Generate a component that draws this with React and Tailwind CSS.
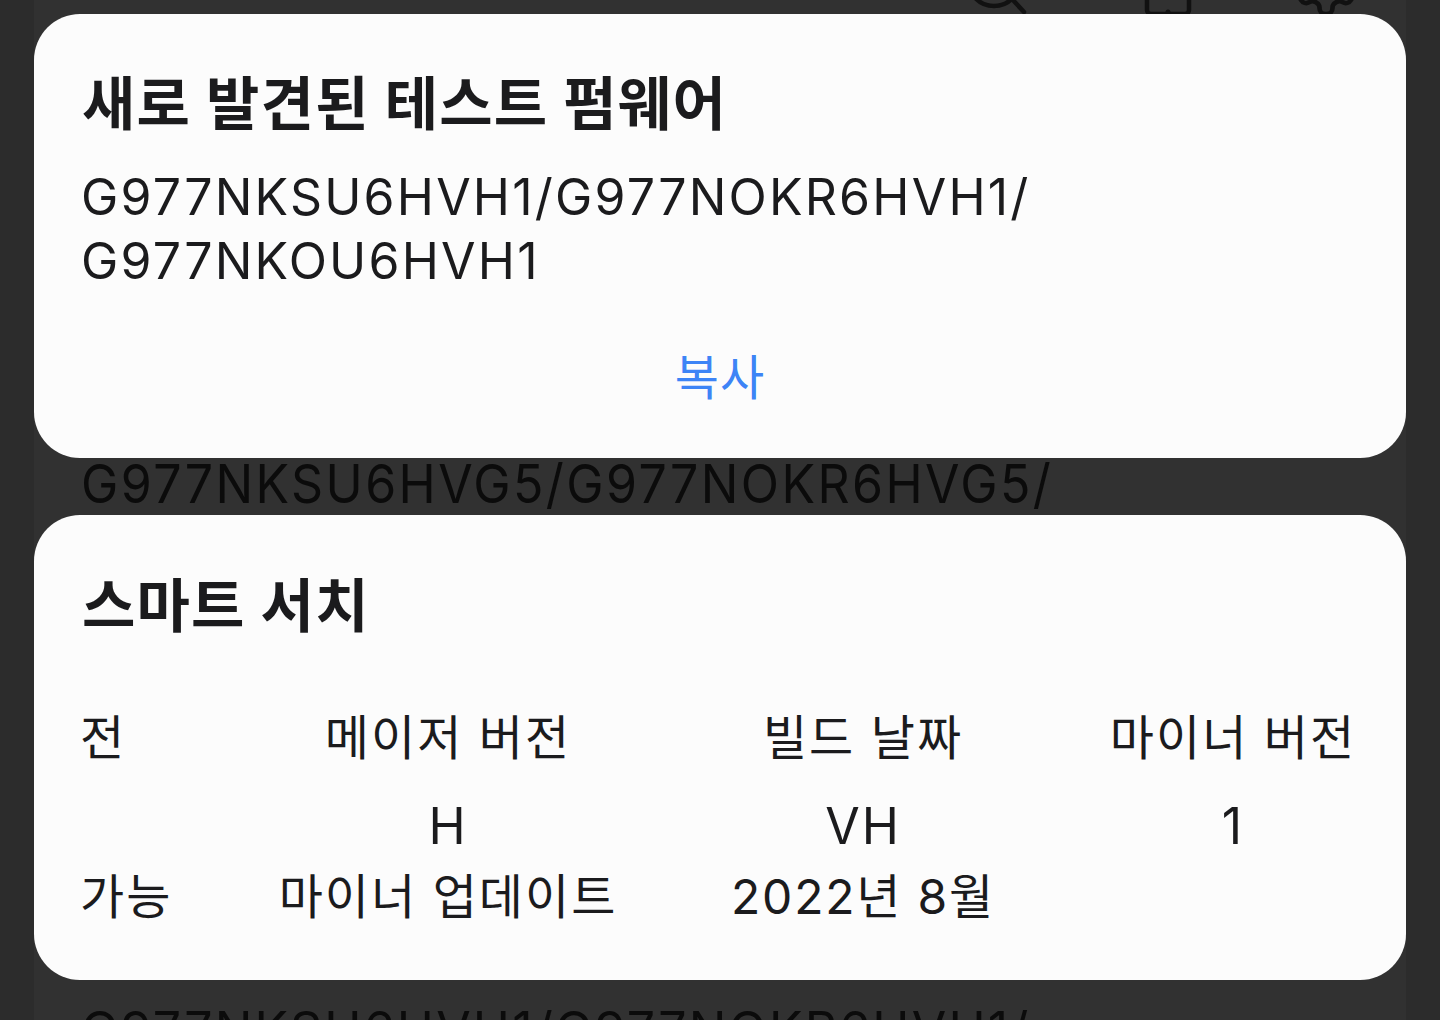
import React from "react";

const FONT = { fontFamily: '"Inter", "Noto Sans CJK KR", sans-serif' };

function TopIcons() {
  return (
    <div className="flex items-start h-[14px] shrink-0 overflow-hidden">
      <div className="w-[930px] shrink-0" />
      <svg width="64" height="64" viewBox="0 0 64 64" className="-mt-[48px] shrink-0" fill="none" stroke="#111" strokeWidth="4.5">
        <circle cx="30" cy="28" r="26" />
        <path d="M48 47 L60 60" strokeLinecap="round" />
      </svg>
      <div className="w-[109px] shrink-0" />
      <svg width="60" height="64" viewBox="0 0 60 64" className="-mt-[50px] shrink-0" fill="none" stroke="#111" strokeWidth="4.5">
        <rect x="10" y="2" width="42" height="62" rx="4" />
        <circle cx="31" cy="62" r="2.5" fill="#111" stroke="none" />
      </svg>
      <div className="w-[94px] shrink-0" />
      <svg width="70" height="70" viewBox="0 0 24 24" className="-mt-[50px] shrink-0" fill="none" stroke="#111" strokeWidth="1.6" strokeLinecap="round" strokeLinejoin="round">
        <path d="M12.22 2h-.44a2 2 0 0 0-2 2v.18a2 2 0 0 1-1 1.73l-.43.25a2 2 0 0 1-2 0l-.15-.08a2 2 0 0 0-2.73.73l-.22.38a2 2 0 0 0 .73 2.730l.15.1a2 2 0 0 1 1 1.72v.51a2 2 0 0 1-1 1.74l-.15.09a2 2 0 0 0-.73 2.73l.22.38a2 2 0 0 0 2.73.73l.15-.08a2 2 0 0 1 2 0l.43.25a2 2 0 0 1 1 1.73V20a2 2 0 0 0 2 2h.44a2 2 0 0 0 2-2v-.18a2 2 0 0 1 1-1.73l.43-.25a2 2 0 0 1 2 0l.15.08a2 2 0 0 0 2.73-.73l.22-.39a2 2 0 0 0-.73-2.73l-.15-.08a2 2 0 0 1-1-1.74v-.5a2 2 0 0 1 1-1.74l.15-.09a2 2 0 0 0 .73-2.73l-.22-.38a2 2 0 0 0-2.73-.73l-.15.08a2 2 0 0 1-2 0l-.43-.25a2 2 0 0 1-1-1.73V4a2 2 0 0 0-2-2z" />
        <circle cx="12" cy="12" r="3" />
      </svg>
    </div>
  );
}

function Background() {
  return (
    <div className="absolute inset-0 flex justify-center">
      <div className="w-[1372px] h-full bg-[#313131] flex flex-col overflow-hidden">
        <TopIcons />
        <div className="h-[438px] shrink-0" />
        <div className="shrink-0 pl-[47px] leading-[58px] text-[50px] text-[#0b0b0b] tracking-[2.4px] scale-y-[1.08] origin-top whitespace-nowrap">
          G977NKSU6HVG5/G977NOKR6HVG5/
        </div>
        <div className="h-[488px] shrink-0" />
        <div className="shrink-0 pl-[47px] leading-[64px] text-[50px] text-[#0b0b0b] tracking-[2.2px] whitespace-nowrap">
          G977NKSU6HVH1/G977NOKR6HVH1/
        </div>
      </div>
    </div>
  );
}

export default function App() {
  return (
    <div className="relative w-[1440px] h-[1020px] overflow-hidden bg-[#2c2c2c]" style={FONT}>
      <Background />
      <div className="relative flex flex-col items-center pt-[14px] gap-[57px]">
        <div className="w-[1372px] h-[444px] bg-[#fcfcfc] rounded-[46px] flex flex-col pl-[48px] pr-[48px] pt-[55px] text-[#1b1b1d]">
          <div className="leading-[70px] text-[58px] font-bold tracking-[1.2px]">새로 발견된 테스트 펌웨어</div>
          <div className="mt-[26px] leading-[64px] text-[50px] tracking-[2.2px] -ml-[1px]">
            <div>G977NKSU6HVH1/G977NOKR6HVH1/</div>
            <div>G977NKOU6HVH1</div>
          </div>
          <div className="mt-[53px] leading-[64px] text-[48px] text-[#3d84f6] text-center -ml-[48px] -mr-[48px] tracking-[1px]">복사</div>
        </div>
        <div className="w-[1372px] h-[465px] bg-[#fcfcfc] rounded-[46px] flex flex-col pl-[48px] pt-[56px] text-[#1b1b1d]">
          <div className="leading-[70px] text-[58px] font-bold tracking-[1.2px]">스마트 서치</div>
          <div className="mt-[65px] grid grid-cols-[160px_412px_418px_322px] text-[48px] leading-[64px] tracking-[2px]">
            <div className="-ml-[2px]">전</div>
            <div className="text-center">메이저 버전</div>
            <div className="text-center">빌드 날짜</div>
            <div className="text-center">마이너 버전</div>
          </div>
          <div className="mt-[24px] grid grid-cols-[160px_412px_418px_322px] text-[50px] leading-[64px] tracking-[2px]">
            <div></div>
            <div className="text-center">H</div>
            <div className="text-center">VH</div>
            <div className="text-center">1</div>
          </div>
          <div className="mt-[7px] grid grid-cols-[160px_412px_418px_322px] text-[48px] leading-[64px] tracking-[2px]">
            <div className="-ml-[2px]">가능</div>
            <div className="text-center whitespace-nowrap">마이너 업데이트</div>
            <div className="text-center whitespace-nowrap tracking-[1.8px]">2022년 8월</div>
            <div></div>
          </div>
        </div>
      </div>
    </div>
  );
}
